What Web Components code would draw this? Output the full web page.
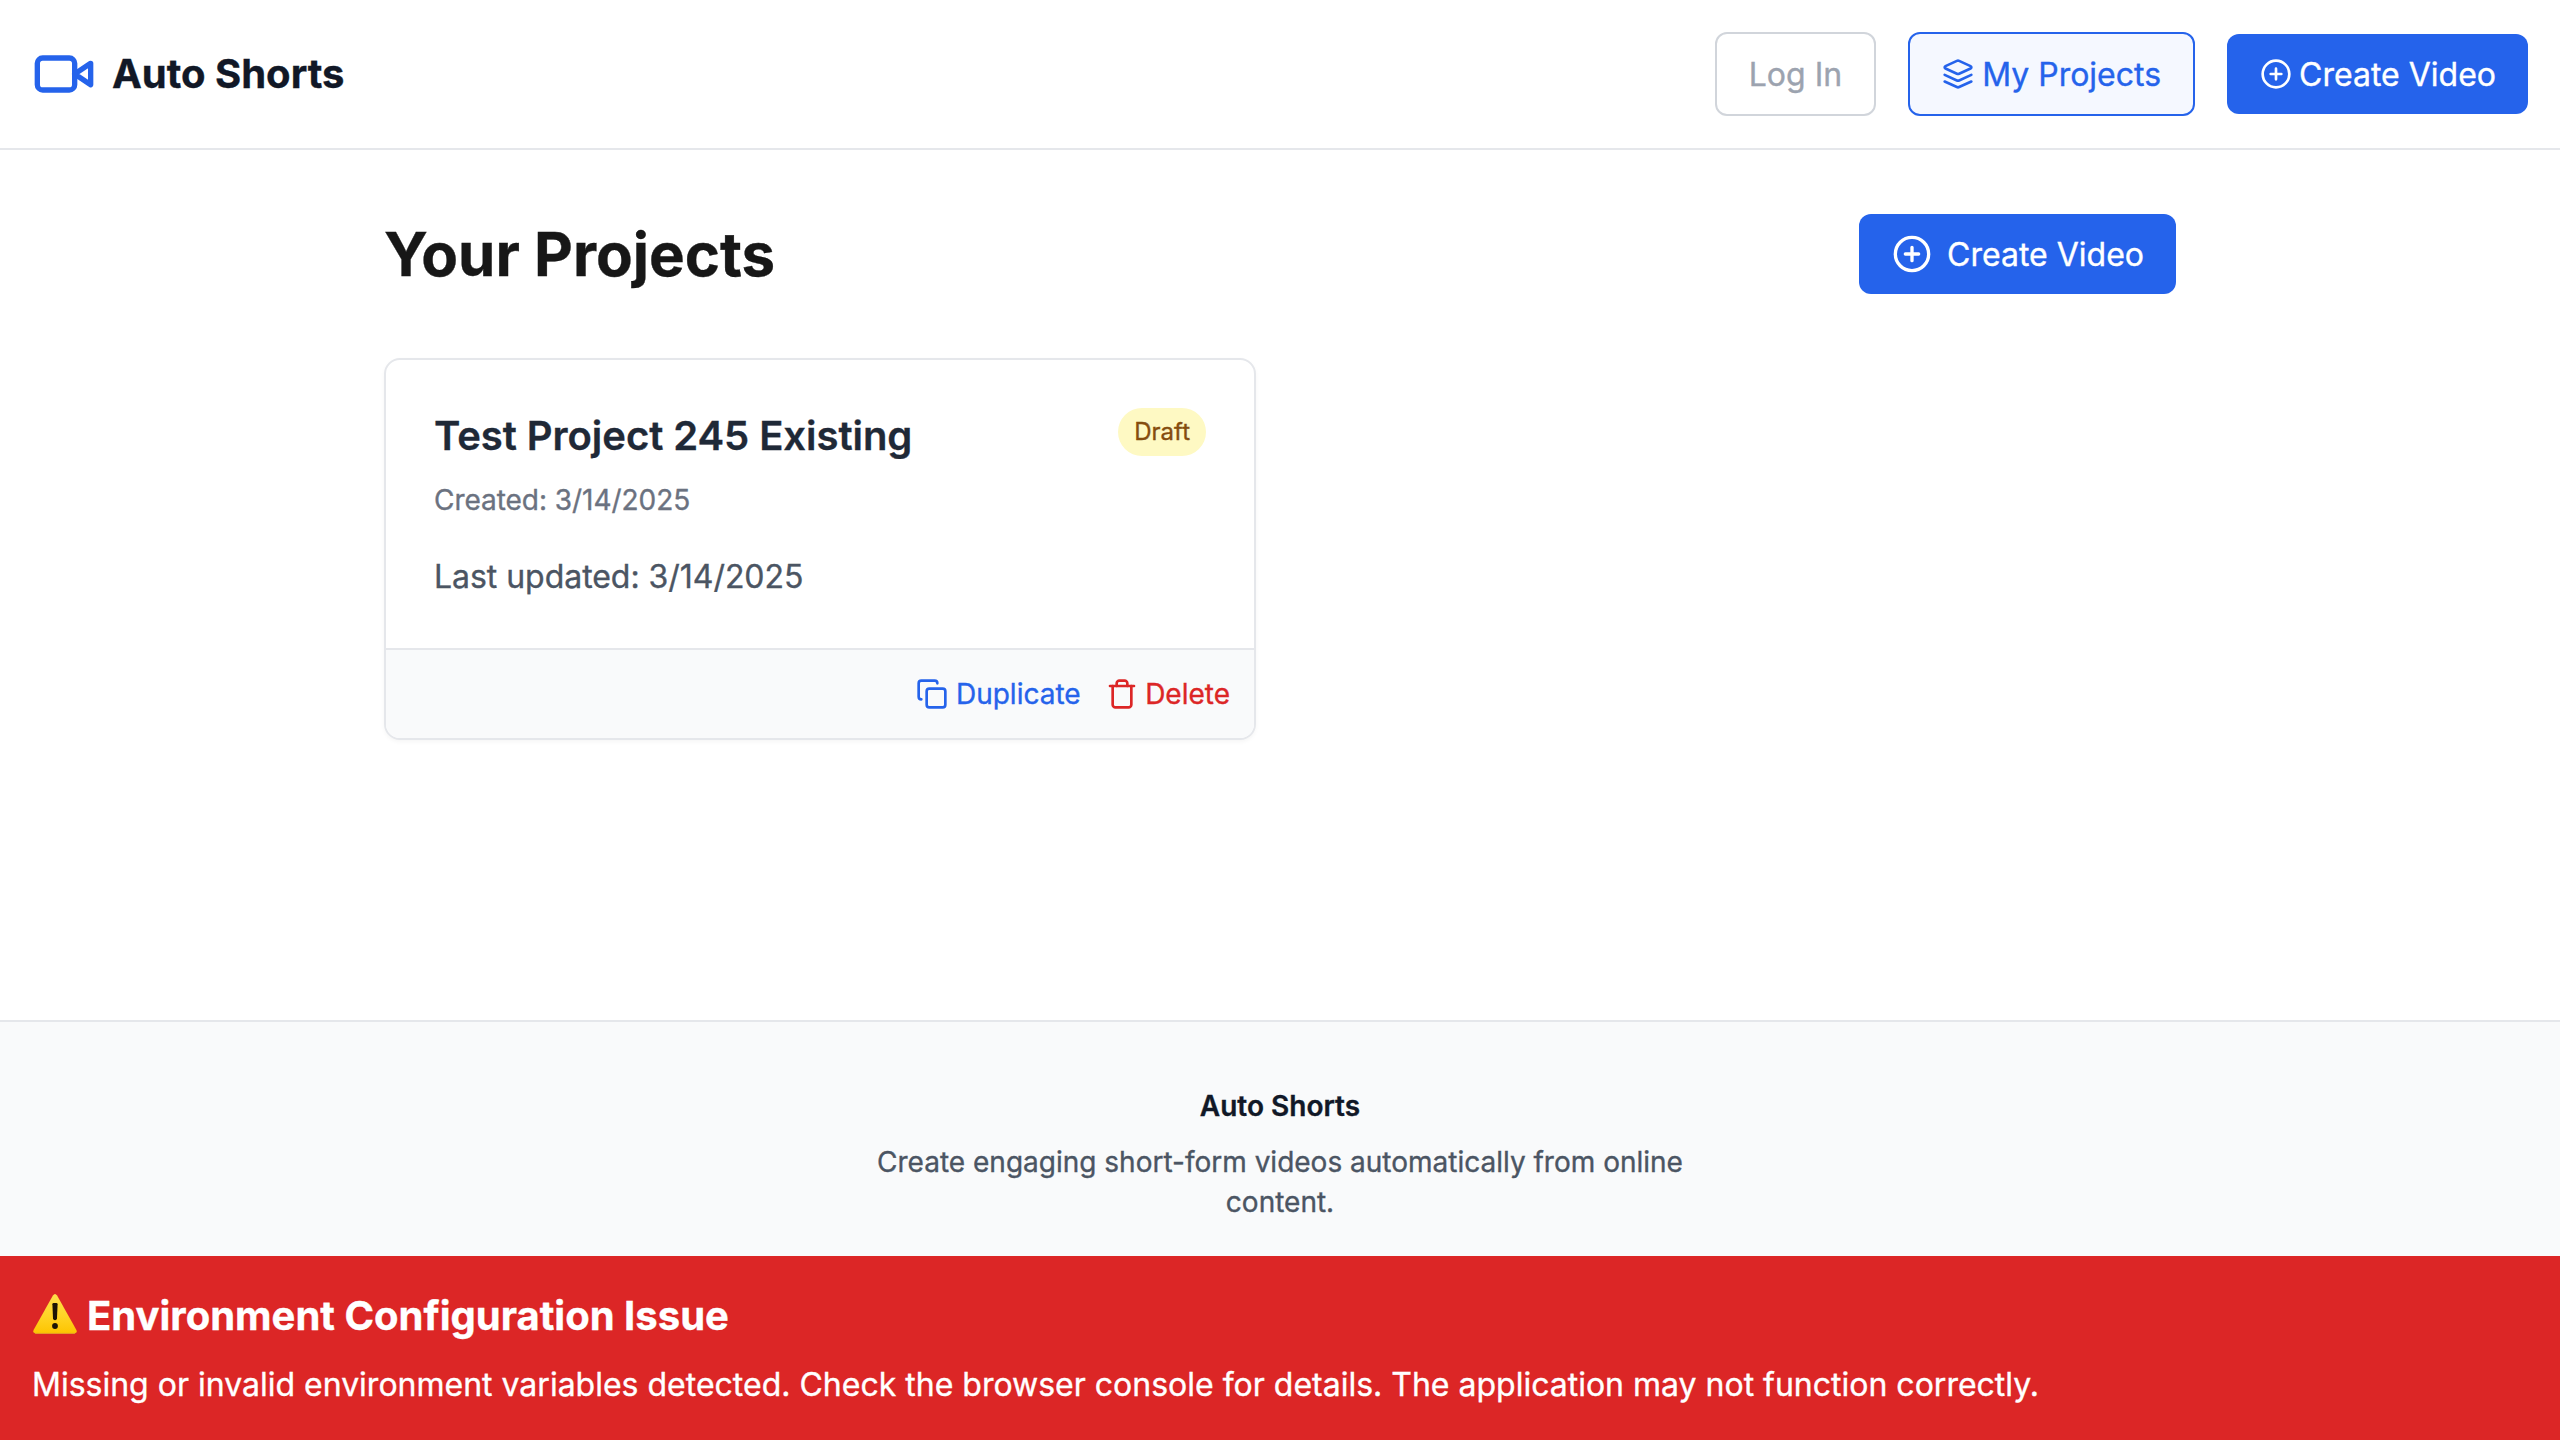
<!DOCTYPE html>
<html lang="en">
<head>
<meta charset="utf-8">
<title>Auto Shorts</title>
<style>
  html, body { margin: 0; height: 100%; }
  body { font-family: Inter, "Liberation Sans", sans-serif; font-size: 32px; line-height: 48px; color: #171717; background: #fff; overflow: hidden; -webkit-text-stroke-width: .35px; }
</style>
</head>
<body>
<shorts-app></shorts-app>
<script>
const define = (name, html, setup) => customElements.define(name, class extends HTMLElement {
  constructor() {
    super();
    const t = document.createElement('template');
    t.innerHTML = html;
    this.attachShadow({ mode: 'open' }).append(t.content.cloneNode(true));
  }
  connectedCallback() { if (setup) setup(this); }
});

const ICONS = {
  video: '<path d="m22 8-6 4 6 4V8Z"/><rect width="14" height="12" x="2" y="6" rx="2"/>',
  layers: '<path d="m12.83 2.18a2 2 0 0 0-1.66 0L2.6 6.08a1 1 0 0 0 0 1.83l8.58 3.91a2 2 0 0 0 1.66 0l8.58-3.9a1 1 0 0 0 0-1.83Z"/><path d="m22 17.65-9.17 4.16a2 2 0 0 1-1.66 0L2 17.65"/><path d="m22 12.65-9.17 4.16a2 2 0 0 1-1.66 0L2 12.65"/>',
  plus: '<circle cx="12" cy="12" r="10"/><path d="M8 12h8M12 8v8"/>',
  copy: '<rect width="14" height="14" x="8" y="8" rx="2"/><path d="M4 16c-1.1 0-2-.9-2-2V4c0-1.1.9-2 2-2h10c1.1 0 2 .9 2 2"/>',
  trash: '<path d="M3 6h18"/><path d="M19 6v14c0 1-1 2-2 2H7c-1 0-2-1-2-2V6"/><path d="M8 6V4c0-1 1-2 2-2h4c1 0 2 1 2 2v2"/>'
};

define('line-icon', `
<style>
  :host { display: block; flex: none; width: var(--size, 32px); height: var(--size, 32px); }
  :host([name="plus"]), :host([name="trash"]) { margin: 0 -.7px 0 .7px; }
  svg { display: block; width: 100%; height: 100%; fill: none; stroke: currentColor; stroke-width: 2; stroke-linecap: round; stroke-linejoin: round; }
</style><svg viewBox="0 0 24 24" aria-hidden="true"></svg>`,
  el => { el.shadowRoot.querySelector('svg').innerHTML = ICONS[el.getAttribute('name')]; });

define('warning-sign', `
<style>:host { display: block; width: 46px; height: 42px; margin: -4px 0 0; } svg { display: block; }</style>
<svg width="46" height="42" viewBox="0 0 46 42" aria-hidden="true">
  <defs><linearGradient id="g" x1="0" y1="0" x2="0" y2="1"><stop offset="0" stop-color="#ffdf4a"/><stop offset=".55" stop-color="#ffd426"/><stop offset="1" stop-color="#fdc400"/></linearGradient></defs>
  <path d="M20.9 2.6Q23 -.4 25.1 2.6L44.4 37Q45.6 40.4 42.4 40.4H3.6Q.4 40.4 1.6 37Z" fill="url(#g)"/>
  <path d="M2.2 39.4Q2.8 40.4 4 40.4H42Q43.2 40.4 43.8 39.4" fill="none" stroke="#e2a92c" stroke-width=".8"/>
  <path d="M20.4 11.2Q20.4 10 21.6 10H24.4Q25.6 10 25.600 11.2L25 25.2Q24.8 27.2 23 27.2T21 25.2Z" fill="#1c1405"/>
  <circle cx="23" cy="33" r="2.9" fill="#1c1405"/>
</svg>`);

define('app-button', `
<style>
  :host { display: flex; align-items: center; gap: var(--gap, 8px); box-sizing: border-box; height: 80px; padding: 0 32px; border-radius: 12px; color: #fff; background: #2563eb; white-space: nowrap; }
  :host([variant="disabled"]) { height: 84px; color: #9ca3af; background: #fff; border: 2px solid #d1d5db; }
  :host([variant="outline"]) { height: 84px; color: #2563eb; background: #f5f8ff; border: 2px solid #2563eb; }
  .label { padding-top: 2px; }
</style><slot name="icon"></slot><span class="label"><slot></slot></span>`);

define('site-header', `
<style>
  :host { display: flex; justify-content: space-between; align-items: center; padding: 32px; border-bottom: 2px solid #e5e7eb; background: #fff; }
  .brand, nav { display: flex; align-items: center; }
  .brand { gap: 16px; font-size: 40px; line-height: 56px; font-weight: 700; color: #111827; }
  .brand line-icon { --size: 64px; color: #2563eb; margin: -4px 0; }
  nav { gap: 32px; }
</style>
<div class="brand"><line-icon name="video"></line-icon><span>Auto Shorts</span></div>
<nav>
  <app-button variant="disabled">Log In</app-button>
  <app-button variant="outline"><line-icon slot="icon" name="layers"></line-icon>My Projects</app-button>
  <app-button><line-icon slot="icon" name="plus"></line-icon>Create Video</app-button>
</nav>`);

define('status-badge', `
<style>:host { display: block; padding: 8px 16px; border-radius: 24px; font-size: 24px; line-height: 32px; color: #854d0e; background: #fef9c3; }</style><slot></slot>`);

define('card-action', `
<style>:host { display: flex; align-items: center; gap: 7.5px; font-size: 28px; line-height: 40px; color: var(--tone); }</style><slot name="icon"></slot><slot></slot>`);

define('project-card', `
<style>
  :host { display: block; box-sizing: border-box; border: 2px solid #e5e7eb; border-radius: 16px; overflow: hidden; background: #fff; box-shadow: 0 2px 4px rgba(0,0,0,.04); }
  .body { padding: 48px; }
  .top { display: flex; justify-content: space-between; align-items: flex-start; }
  h2 { margin: 0; font-size: 40px; line-height: 56px; font-weight: 600; letter-spacing: -.05px; color: #1f2937; }
  .created { margin: 16px 0 32px; font-size: 28px; line-height: 40px; letter-spacing: -.04px; color: #6b7280; }
  .updated { margin: 0 0 -1px; padding-top: 1px; letter-spacing: -.04px; color: #4b5563; }
  .actions { display: flex; justify-content: flex-end; gap: 25px; padding: 24px; border-top: 2px solid #e5e7eb; background: #f9fafb; }
</style>
<div class="body">
  <div class="top"><h2><slot name="title"></slot></h2><slot name="status"></slot></div>
  <p class="created"><slot name="created"></slot></p>
  <p class="updated"><slot name="updated"></slot></p>
</div>
<div class="actions">
  <card-action style="--tone:#2563eb"><line-icon slot="icon" name="copy"></line-icon>Duplicate</card-action>
  <card-action style="--tone:#dc2626"><line-icon slot="icon" name="trash"></line-icon>Delete</card-action>
</div>`);

define('projects-page', `
<style>
  :host { display: block; width: 1792px; margin: 0 auto; padding-top: 64px; }
  .head { display: flex; justify-content: space-between; align-items: center; margin-bottom: 64px; }
  h1 { margin: 0; padding-bottom: 1px; font-size: 60px; line-height: 72px; font-weight: 700; color: #171717; }
  app-button { --gap: 16px; }
  line-icon { --size: 40px; }
  .grid { display: grid; grid-template-columns: 1fr 1fr; gap: 48px; }
</style>
<div class="head"><h1>Your Projects</h1><app-button><line-icon slot="icon" name="plus"></line-icon>Create Video</app-button></div>
<div class="grid">
  <project-card>
    <span slot="title">Test Project 245 Existing</span>
    <status-badge slot="status">Draft</status-badge>
    <span slot="created">Created: 3/14/2025</span>
    <span slot="updated">Last updated: 3/14/2025</span>
  </project-card>
</div>`);

define('site-footer', `
<style>
  :host { display: flex; flex-direction: column; align-items: center; gap: 16px; box-sizing: border-box; height: 236px; padding-top: 64px; border-top: 2px solid #e5e7eb; background: #f9fafb; font-size: 28px; line-height: 40px; text-align: center; }
  strong { font-weight: 600; color: #111827; }
  p { margin: 0; width: 896px; color: #4b5563; }
</style>
<strong>Auto Shorts</strong>
<p>Create engaging short-form videos automatically from online content.</p>`);

define('config-alert', `
<style>
  :host { display: flex; flex-direction: column; gap: 16px; padding: 32px; color: #fff; background: #dc2626; }
  .title { display: flex; align-items: center; gap: 9px; font-size: 40px; line-height: 56px; font-weight: 700; }
  p { margin: 0 0 -1px; padding-top: 1px; }
</style>
<div class="title"><warning-sign></warning-sign><span>Environment Configuration Issue</span></div>
<p>Missing or invalid environment variables detected. Check the browser console for details. The application may not function correctly.</p>`);

define('shorts-app', `
<style>
  :host { display: flex; flex-direction: column; height: 100vh; }
  main { flex: 1; }
</style>
<site-header></site-header>
<main><projects-page></projects-page></main>
<site-footer></site-footer>
<config-alert></config-alert>`);
</script>
</body>
</html>
